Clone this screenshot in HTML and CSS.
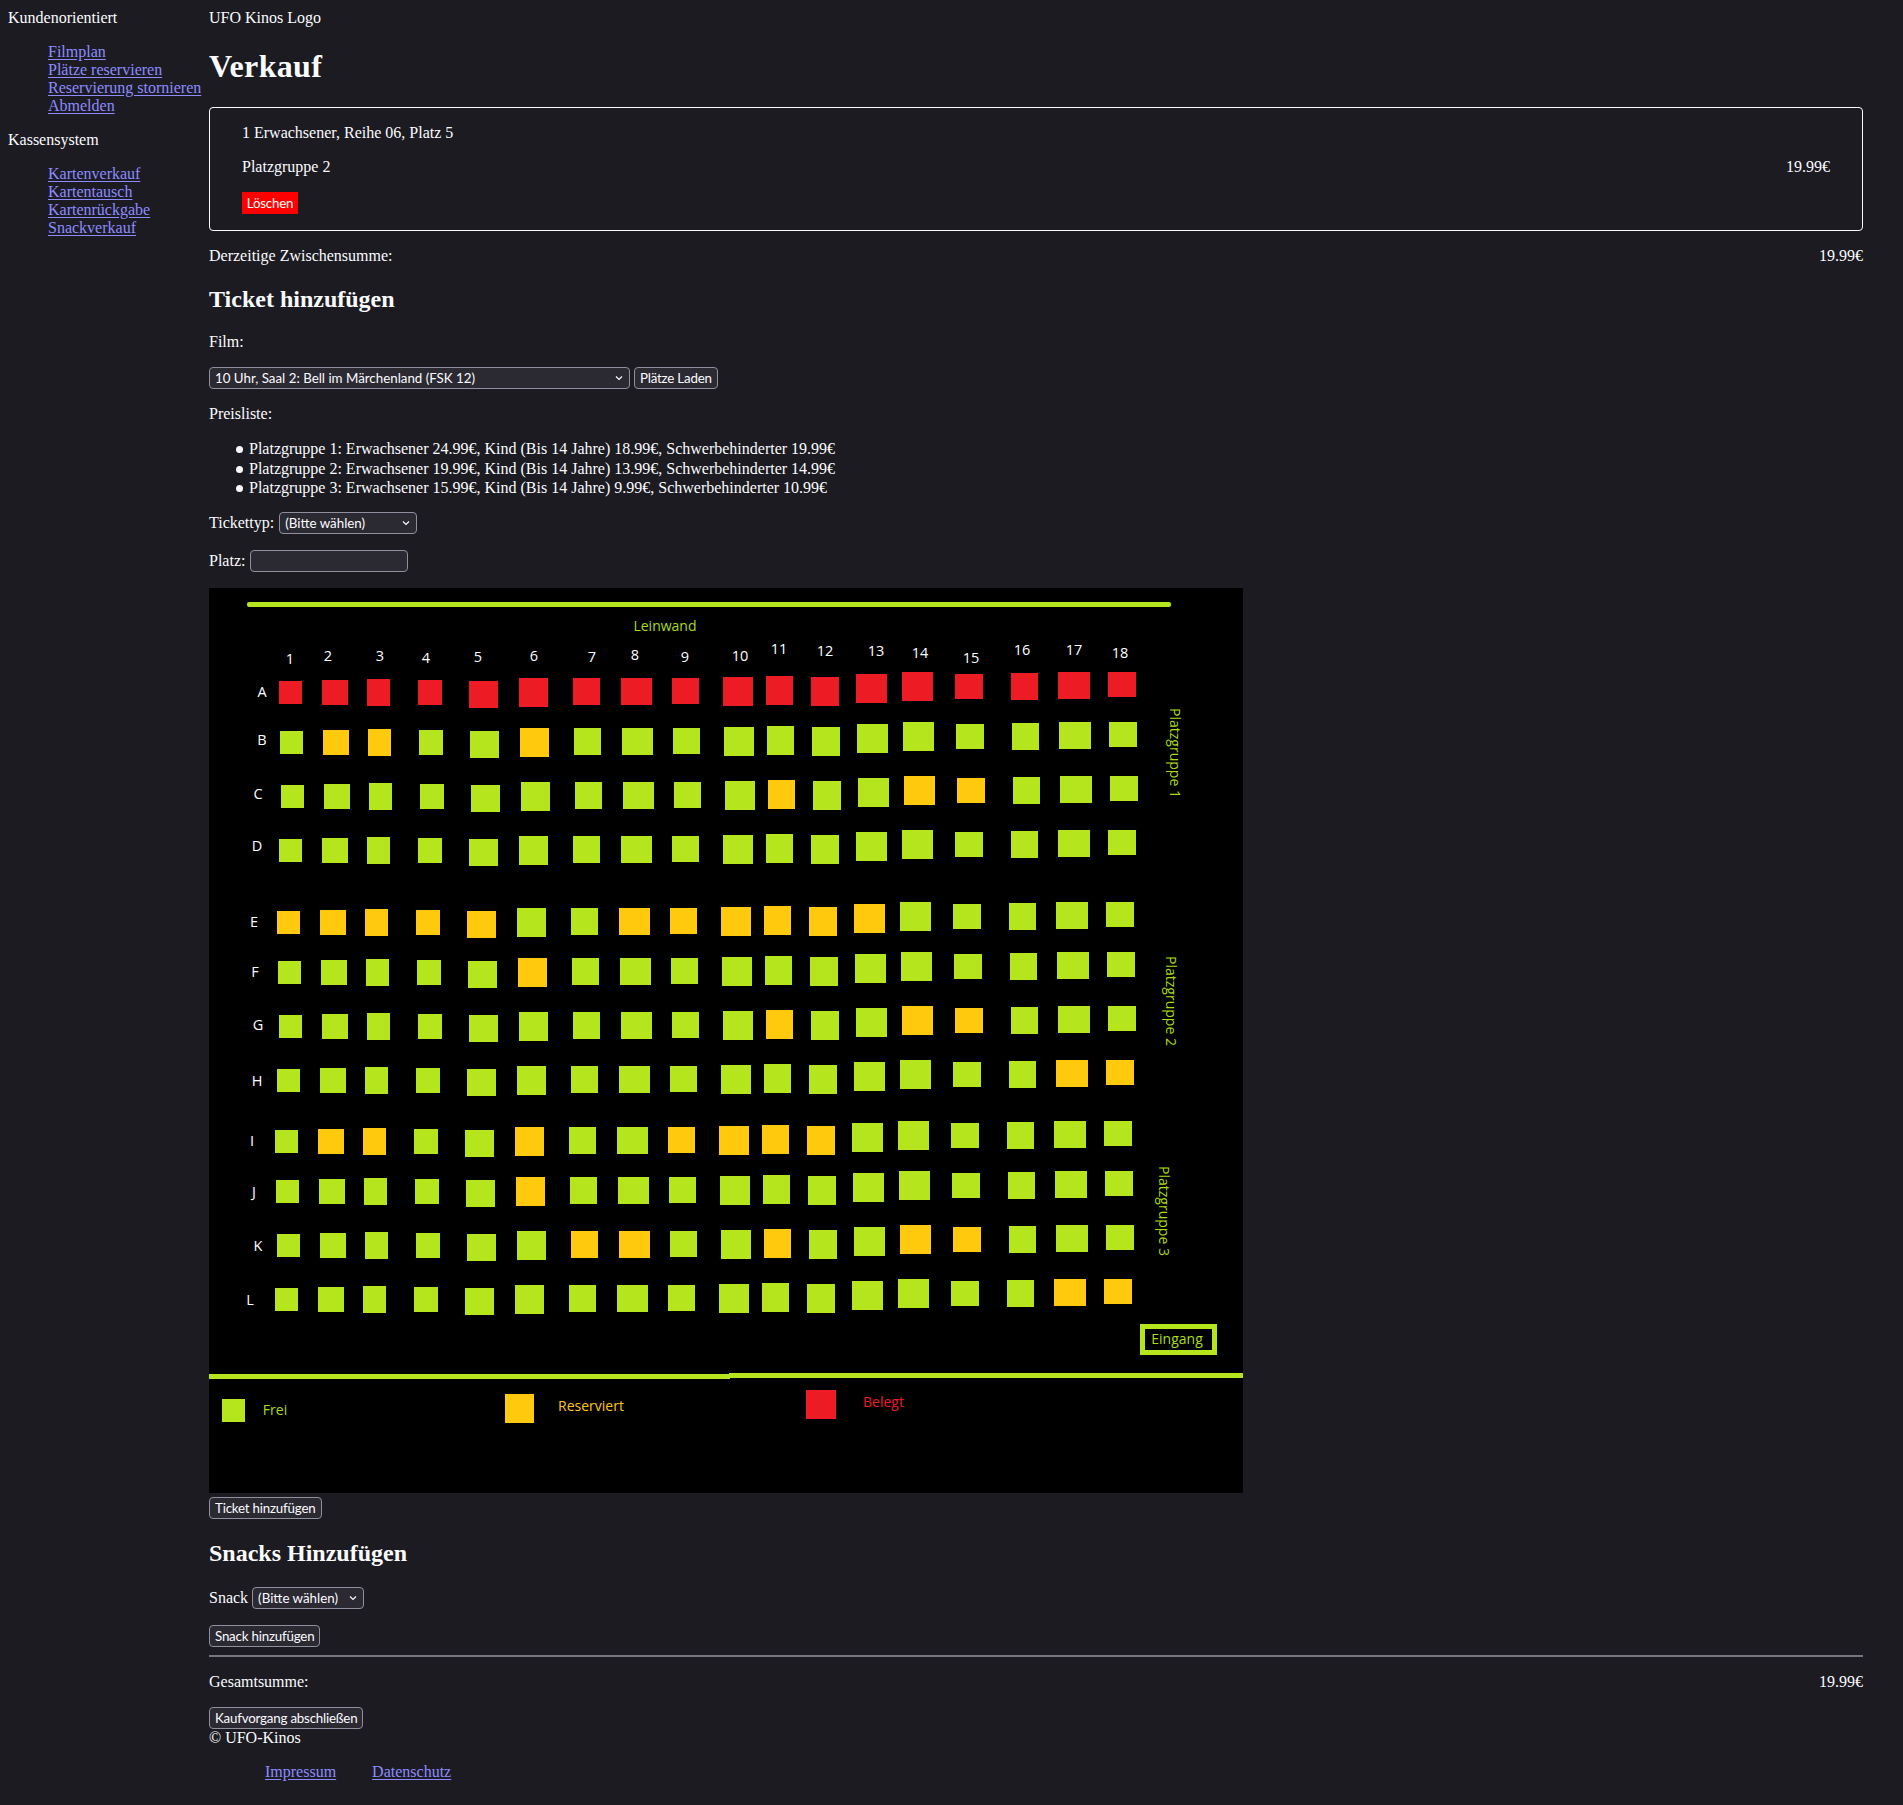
FILE: index.html
```html
<!DOCTYPE html>
<html lang="de">
<head>
<meta charset="utf-8">
<title>Verkauf</title>
<link rel="stylesheet" href="styles.css">
</head>
<body>
<div class="page">
  <nav class="sidebar">
    <div>Kundenorientiert</div>
    <ul class="nav-list">
      <li><a href="#">Filmplan</a></li>
      <li><a href="#">Plätze reservieren</a></li>
      <li><a href="#">Reservierung stornieren</a></li>
      <li><a href="#">Abmelden</a></li>
    </ul>
    <div>Kassensystem</div>
    <ul class="nav-list">
      <li><a href="#">Kartenverkauf</a></li>
      <li><a href="#">Kartentausch</a></li>
      <li><a href="#">Kartenrückgabe</a></li>
      <li><a href="#">Snackverkauf</a></li>
    </ul>
  </nav>
  <main class="content">
    <div>UFO Kinos Logo</div>
    <h1>Verkauf</h1>
    <section class="cart-box">
      <p>1 Erwachsener, Reihe 06, Platz 5</p>
      <p class="sum-row"><span>Platzgruppe 2</span><span>19.99€</span></p>
      <button class="delete-btn" type="button">Löschen</button>
    </section>
    <p class="sum-row"><span>Derzeitige Zwischensumme:</span><span>19.99€</span></p>

    <h2>Ticket hinzufügen</h2>
    <p>Film:</p>
    <div class="control-row">
      <select class="select-film"><option>10 Uhr, Saal 2: Bell im Märchenland (FSK 12)</option></select>
      <button type="button">Plätze Laden</button>
    </div>
    <p>Preisliste:</p>
    <ul class="price-list">
      <li>Platzgruppe 1: Erwachsener 24.99€, Kind (Bis 14 Jahre) 18.99€, Schwerbehinderter 19.99€</li>
      <li>Platzgruppe 2: Erwachsener 19.99€, Kind (Bis 14 Jahre) 13.99€, Schwerbehinderter 14.99€</li>
      <li>Platzgruppe 3: Erwachsener 15.99€, Kind (Bis 14 Jahre) 9.99€, Schwerbehinderter 10.99€</li>
    </ul>
    <div class="control-row control-row-wide">
      <label for="ticket">Tickettyp:</label>
      <select id="ticket" class="select-ticket"><option>(Bitte wählen)</option></select>
    </div>
    <div class="control-row control-row-wide">
      <label for="seat">Platz:</label>
      <input id="seat" class="seat-input" type="text">
    </div>

    <div class="map-wrap">
      <svg class="seat-map" width="1034" height="905" viewBox="209 588 1034 905" role="img" aria-label="Saalplan">
        <defs>
          <rect id="s1" x="279" y="681" width="23" height="23"/>
          <rect id="s2" x="322" y="680" width="26" height="25"/>
          <rect id="s3" x="367" y="679" width="23" height="27"/>
          <rect id="s4" x="418" y="680" width="24" height="25"/>
          <rect id="s5" x="469" y="681" width="29" height="27"/>
          <rect id="s6" x="519" y="678" width="29" height="29"/>
          <rect id="s7" x="573" y="678" width="27" height="27"/>
          <rect id="s8" x="621" y="678" width="31" height="27"/>
          <rect id="s9" x="672" y="678" width="27" height="26"/>
          <rect id="s10" x="723" y="677" width="30" height="29"/>
          <rect id="s11" x="766" y="676" width="27" height="29"/>
          <rect id="s12" x="811" y="677" width="28" height="29"/>
          <rect id="s13" x="856" y="674" width="31" height="29"/>
          <rect id="s14" x="902" y="672" width="31" height="29"/>
          <rect id="s15" x="955" y="674" width="28" height="25"/>
          <rect id="s16" x="1011" y="673" width="27" height="27"/>
          <rect id="s17" x="1058" y="672" width="32" height="27"/>
          <rect id="s18" x="1108" y="672" width="28" height="25"/>
        </defs>
        <rect class="map-bg" x="209" y="588" width="1034" height="905"/>
        <rect class="line" x="247" y="602" width="924" height="5" rx="2"/>
        <text class="map-label" x="665" y="625">Leinwand</text>

        <g class="col-label">
          <text x="290" y="658">1</text><text x="328" y="655">2</text><text x="380" y="655">3</text>
          <text x="426" y="657">4</text><text x="478" y="656">5</text><text x="534" y="655">6</text>
          <text x="592" y="656">7</text><text x="635" y="654">8</text><text x="685" y="656">9</text>
          <text x="740" y="655">10</text><text x="779" y="648">11</text><text x="825" y="650">12</text>
          <text x="876" y="650">13</text><text x="920" y="652">14</text><text x="971" y="657">15</text>
          <text x="1022" y="649">16</text><text x="1074" y="649">17</text><text x="1120" y="652">18</text>
          <text x="262" y="691">A</text><text x="262" y="739">B</text><text x="258" y="793">C</text>
          <text x="257" y="845">D</text><text x="254" y="921">E</text><text x="255" y="971">F</text>
          <text x="258" y="1024">G</text><text x="257" y="1080">H</text><text x="252" y="1140">I</text>
          <text x="254" y="1191">J</text><text x="258" y="1245">K</text><text x="250" y="1299">L</text>
        </g>

        <g class="seat-taken"><use href="#s1"/><use href="#s2"/><use href="#s3"/><use href="#s4"/><use href="#s5"/><use href="#s6"/><use href="#s7"/><use href="#s8"/><use href="#s9"/><use href="#s10"/><use href="#s11"/><use href="#s12"/><use href="#s13"/><use href="#s14"/><use href="#s15"/><use href="#s16"/><use href="#s17"/><use href="#s18"/></g>
        <g class="seat-free" transform="translate(1 50)"><use href="#s1"/><use href="#s2" class="res"/><use href="#s3" class="res"/><use href="#s4"/><use href="#s5"/><use href="#s6" class="res"/><use href="#s7"/><use href="#s8"/><use href="#s9"/><use href="#s10"/><use href="#s11"/><use href="#s12"/><use href="#s13"/><use href="#s14"/><use href="#s15"/><use href="#s16"/><use href="#s17"/><use href="#s18"/></g>
        <g class="seat-free" transform="translate(2 104)"><use href="#s1"/><use href="#s2"/><use href="#s3"/><use href="#s4"/><use href="#s5"/><use href="#s6"/><use href="#s7"/><use href="#s8"/><use href="#s9"/><use href="#s10"/><use href="#s11" class="res"/><use href="#s12"/><use href="#s13"/><use href="#s14" class="res"/><use href="#s15" class="res"/><use href="#s16"/><use href="#s17"/><use href="#s18"/></g>
        <g class="seat-free" transform="translate(0 158)"><use href="#s1"/><use href="#s2"/><use href="#s3"/><use href="#s4"/><use href="#s5"/><use href="#s6"/><use href="#s7"/><use href="#s8"/><use href="#s9"/><use href="#s10"/><use href="#s11"/><use href="#s12"/><use href="#s13"/><use href="#s14"/><use href="#s15"/><use href="#s16"/><use href="#s17"/><use href="#s18"/></g>
        <g class="seat-free" transform="translate(-2 230)"><use href="#s1" class="res"/><use href="#s2" class="res"/><use href="#s3" class="res"/><use href="#s4" class="res"/><use href="#s5" class="res"/><use href="#s6"/><use href="#s7"/><use href="#s8" class="res"/><use href="#s9" class="res"/><use href="#s10" class="res"/><use href="#s11" class="res"/><use href="#s12" class="res"/><use href="#s13" class="res"/><use href="#s14"/><use href="#s15"/><use href="#s16"/><use href="#s17"/><use href="#s18"/></g>
        <g class="seat-free" transform="translate(-1 280)"><use href="#s1"/><use href="#s2"/><use href="#s3"/><use href="#s4"/><use href="#s5"/><use href="#s6" class="res"/><use href="#s7"/><use href="#s8"/><use href="#s9"/><use href="#s10"/><use href="#s11"/><use href="#s12"/><use href="#s13"/><use href="#s14"/><use href="#s15"/><use href="#s16"/><use href="#s17"/><use href="#s18"/></g>
        <g class="seat-free" transform="translate(0 334)"><use href="#s1"/><use href="#s2"/><use href="#s3"/><use href="#s4"/><use href="#s5"/><use href="#s6"/><use href="#s7"/><use href="#s8"/><use href="#s9"/><use href="#s10"/><use href="#s11" class="res"/><use href="#s12"/><use href="#s13"/><use href="#s14" class="res"/><use href="#s15" class="res"/><use href="#s16"/><use href="#s17"/><use href="#s18"/></g>
        <g class="seat-free" transform="translate(-2 388)"><use href="#s1"/><use href="#s2"/><use href="#s3"/><use href="#s4"/><use href="#s5"/><use href="#s6"/><use href="#s7"/><use href="#s8"/><use href="#s9"/><use href="#s10"/><use href="#s11"/><use href="#s12"/><use href="#s13"/><use href="#s14"/><use href="#s15"/><use href="#s16"/><use href="#s17" class="res"/><use href="#s18" class="res"/></g>
        <g class="seat-free" transform="translate(-4 449)"><use href="#s1"/><use href="#s2" class="res"/><use href="#s3" class="res"/><use href="#s4"/><use href="#s5"/><use href="#s6" class="res"/><use href="#s7"/><use href="#s8"/><use href="#s9" class="res"/><use href="#s10" class="res"/><use href="#s11" class="res"/><use href="#s12" class="res"/><use href="#s13"/><use href="#s14"/><use href="#s15"/><use href="#s16"/><use href="#s17"/><use href="#s18"/></g>
        <g class="seat-free" transform="translate(-3 499)"><use href="#s1"/><use href="#s2"/><use href="#s3"/><use href="#s4"/><use href="#s5"/><use href="#s6" class="res"/><use href="#s7"/><use href="#s8"/><use href="#s9"/><use href="#s10"/><use href="#s11"/><use href="#s12"/><use href="#s13"/><use href="#s14"/><use href="#s15"/><use href="#s16"/><use href="#s17"/><use href="#s18"/></g>
        <g class="seat-free" transform="translate(-2 553)"><use href="#s1"/><use href="#s2"/><use href="#s3"/><use href="#s4"/><use href="#s5"/><use href="#s6"/><use href="#s7" class="res"/><use href="#s8" class="res"/><use href="#s9"/><use href="#s10"/><use href="#s11" class="res"/><use href="#s12"/><use href="#s13"/><use href="#s14" class="res"/><use href="#s15" class="res"/><use href="#s16"/><use href="#s17"/><use href="#s18"/></g>
        <g class="seat-free" transform="translate(-4 607)"><use href="#s1"/><use href="#s2"/><use href="#s3"/><use href="#s4"/><use href="#s5"/><use href="#s6"/><use href="#s7"/><use href="#s8"/><use href="#s9"/><use href="#s10"/><use href="#s11"/><use href="#s12"/><use href="#s13"/><use href="#s14"/><use href="#s15"/><use href="#s16"/><use href="#s17" class="res"/><use href="#s18" class="res"/></g>

        <text class="map-label" transform="translate(1175 753) rotate(90)">Platzgruppe 1</text>
        <text class="map-label" transform="translate(1171 1001) rotate(90)">Platzgruppe 2</text>
        <text class="map-label" transform="translate(1164 1211) rotate(90)">Platzgruppe 3</text>

        <rect class="entrance" x="1142.5" y="1326.5" width="72" height="26"/>
        <text class="map-label" x="1177" y="1338">Eingang</text>

        <rect class="line" x="209" y="1374" width="521" height="5"/>
        <rect class="line" x="729" y="1373" width="514" height="5"/>

        <rect class="seat-free" x="222" y="1399" width="23" height="23"/>
        <text class="map-label" x="275" y="1409">Frei</text>
        <rect class="fill-res" x="505" y="1394" width="29" height="29"/>
        <text class="map-label label-res" x="591" y="1405">Reserviert</text>
        <rect class="seat-taken" x="806" y="1390" width="30" height="29"/>
        <text class="map-label label-taken" x="883.5" y="1401">Belegt</text>
      </svg>
      <button type="button">Ticket hinzufügen</button>
    </div>

    <h2>Snacks Hinzufügen</h2>
    <div class="control-row">
      <label for="snack">Snack</label>
      <select id="snack" class="select-snack"><option>(Bitte wählen)</option></select>
    </div>
    <div class="snack-action"><button type="button">Snack hinzufügen</button></div>
    <hr>
    <p class="sum-row"><span>Gesamtsumme:</span><span>19.99€</span></p>
    <div class="checkout"><button type="button">Kaufvorgang abschließen</button></div>
    <footer>
      <div>© UFO-Kinos</div>
      <ul class="footer-links">
        <li><a href="#">Impressum</a></li>
        <li><a href="#">Datenschutz</a></li>
      </ul>
    </footer>
  </main>
</div>
</body>
</html>
```

FILE: styles.css
```css
html { color-scheme: dark; }
body {
  margin: 0;
  background: #1c1b22;
  color: #fbfbfe;
  font-family: "Liberation Serif", "Times New Roman", serif;
  font-size: 16px;
  line-height: 18px;
}
a {
  color: #8c8cff;
  text-underline-offset: 2px;
}
.page {
  display: flex;
  align-items: flex-start;
  padding: 9px 40px 8px 8px;
}
.sidebar { flex: 0 0 201px; }
.nav-list {
  list-style: none;
  margin: 16px 0;
  padding: 0 0 0 40px;
}
.content { flex: 1; min-width: 0; }
h1 {
  font-size: 32px;
  line-height: 37px;
  margin: 21.44px 0;
  letter-spacing: 0.35px;
}
h2 {
  font-size: 24px;
  line-height: 27.5px;
  margin: 20.7px 0 20px;
}
p { margin: 16px 0; }
.cart-box {
  border: 1px solid #fbfbfe;
  border-radius: 4px;
  padding: 16px 32px;
}
.cart-box p:first-child { margin-top: 0; }
.sum-row {
  display: flex;
  justify-content: space-between;
}
button, select, input {
  box-sizing: border-box;
  height: 22px;
  margin: 0;
  color: #fbfbfe;
  background-color: #2b2a33;
  border: 1px solid #8f8f9d;
  border-radius: 4px;
  font-family: Lato, Roboto, sans-serif;
  font-size: 13.33px;
  vertical-align: top;
}
button {
  padding: 0 5px;
  letter-spacing: -0.2px;
}
select {
  appearance: none;
  padding: 0 18px 0 5px;
  background-image: url("data:image/svg+xml,%3Csvg xmlns='http://www.w3.org/2000/svg' width='8' height='6'%3E%3Cpath d='M1 1.5l3 3 3-3' fill='none' stroke='%23fbfbfe' stroke-width='1.2'/%3E%3C/svg%3E");
  background-repeat: no-repeat;
  background-position: right 6px center;
}
input { padding: 0 4px; }
.delete-btn {
  display: block;
  width: 56px;
  padding: 1px 0 0;
  background: #f00;
  border: 0;
  border-radius: 0;
  color: #fff;
}
.control-row {
  display: flex;
  align-items: center;
  gap: 4px;
  margin: 16px 0;
}
.control-row-wide { gap: 5px; }
.select-film { width: 421px; }
.select-ticket { width: 138px; }
.select-snack { width: 112px; }
.seat-input { width: 158px; }
.price-list {
  list-style: none;
  margin: 16px 0 14.3px;
  padding-left: 40px;
  line-height: 19.5px;
}
.price-list + .control-row { margin-top: 14.3px; }
.price-list li::before {
  content: "";
  display: inline-block;
  width: 7px;
  height: 7px;
  margin: 0 6px 1px -13px;
  border-radius: 50%;
  background: #fbfbfe;
  vertical-align: middle;
}
.map-wrap { margin: 16px 0 0; }
.seat-map {
  display: block;
  margin-bottom: 4px;
}
.map-bg { fill: #000; }
.line { fill: #b5e61d; }
.seat-free { fill: #b5e61d; }
.seat-taken { fill: #ed1c24; }
.res, .fill-res { fill: #ffc90e; }
.entrance {
  fill: none;
  stroke: #b5e61d;
  stroke-width: 5;
}
.map-label {
  font-family: "Open Sans", sans-serif;
  font-size: 14px;
  fill: #a9dc12;
  text-anchor: middle;
  dominant-baseline: central;
}
.label-res { fill: #ffc90e; }
.label-taken { fill: #ed1c24; }
.col-label text {
  font-family: "Open Sans", sans-serif;
  font-size: 14.5px;
  fill: #fff;
  text-anchor: middle;
  dominant-baseline: central;
}
.snack-action { margin: 16px 0 8px; height: 22px; }
hr {
  height: 2px;
  margin: 8px 0;
  padding: 0;
  border: 0;
  background: #77767e;
}
.checkout { margin: 16px 0 0; height: 22px; }
.footer-links {
  list-style: none;
  margin: 16px 0 15px;
  padding: 0 0 0 40px;
}
.footer-links li {
  display: inline-block;
  margin: 0 16px;
}
```
